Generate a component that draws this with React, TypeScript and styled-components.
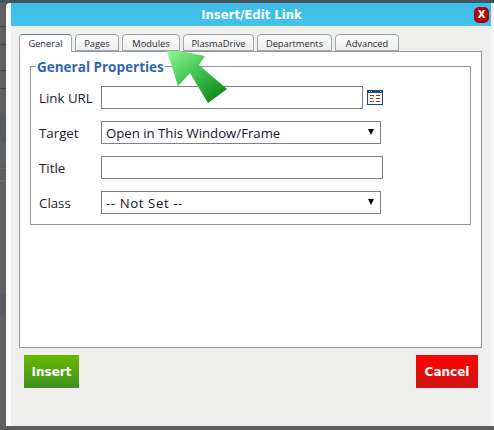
import React from 'react'
import styled, { createGlobalStyle } from 'styled-components'

const GlobalStyle = createGlobalStyle`
  html, body {
    margin: 0;
    padding: 0;
    background: #5f5f5f;
    overflow: hidden;
  }
`

// the dimmed page behind the dialog only shows as a thin strip on the left and top
const Backdrop = styled.div`
  position: relative;
  box-sizing: border-box;
  width: 494px;
  height: 430px;
  padding: 3px 0 4px 6px;
  background:
    linear-gradient(#42555f 0 3px, transparent 3px),
    linear-gradient(
      transparent 26px, #474747 26px 27px, transparent 27px 44px, #474747 44px 45px,
      transparent 45px 70px, #474747 70px 71px, transparent 71px 88px, #474747 88px 89px,
      transparent 89px 115px, #575c64 115px 143px, #5d6268 143px 165px, transparent 165px 168px,
      #6a6a6a 168px 169px, transparent 169px 180px, #6a6a6a 180px 182px, transparent 182px 294px,
      #565b63 294px 315px, transparent 315px
    ),
    #5f5f5f;
`

const Dialog = styled.div`
  box-sizing: border-box;
  display: flex;
  flex-direction: column;
  height: 423px;
  background: #efefee;
  border-left: 5px solid #fafafa;
  border-right: 3px solid #f6f6f6;
  border-top-left-radius: 4px;
  overflow: hidden;
`

const TitleBar = styled.div`
  position: relative;
  flex: none;
  height: 23px;
  margin: 0 -3px 0 -5px;
  background: linear-gradient(#3dbde6, #43c1ea);
  display: flex;
  align-items: center;
  justify-content: center;
  color: #fff;
  font: bold 11.7px "DejaVu Sans", sans-serif;
  padding-left: 3px;
`

const CloseButton = styled.div`
  position: absolute;
  right: 5px;
  top: 4px;
  width: 15px;
  height: 16px;
  border-radius: 5px;
  background: radial-gradient(circle at 50% 40%, #c81010, #8a0000);
  color: #fff;
  font: bold 10px/16px "DejaVu Sans", sans-serif;
  text-align: center;
`

const Body = styled.div`
  flex: 1;
  display: flex;
  flex-direction: column;
  padding: 8px 9px 0 8px;
`

const Tabs = styled.div`
  display: flex;
  gap: 3px;
  height: 17px;
  position: relative;
  z-index: 1;
`

const Tab = styled.div<{ $active?: boolean; $width: number }>`
  box-sizing: border-box;
  width: ${p => p.$width}px;
  height: ${p => (p.$active ? 18 : 17)}px;
  border: 1px solid #9ea5a8;
  border-bottom: ${p => (p.$active ? '0' : '1px solid #9ea5a8')};
  border-top-color: ${p => (p.$active ? '#5f7f92' : '#9ea5a8')};
  border-radius: 4px 4px 0 0;
  background: ${p => (p.$active ? '#fff' : 'linear-gradient(#fbfbfb, #eeeeec)')};
  color: #2a2a3a;
  font: 9.3px/18px "Open Sans", sans-serif;
  text-align: center;
`

const Panel = styled.div`
  box-sizing: border-box;
  height: 297px;
  background: #fff;
  border: 1px solid #8f9a9f;
  padding: 14px 10px 0;
`

const Fieldset = styled.div`
  position: relative;
  box-sizing: border-box;
  height: 159px;
  border: 1px solid #8f9699;
  padding: 19px 0 0 8px;
  display: flex;
  flex-direction: column;
  gap: 12px;
`

const Legend = styled.div`
  position: absolute;
  left: 5px;
  top: -8px;
  padding: 0 1px;
  background: #fff;
  color: #3065ad;
  font: bold 13.5px/16px "Open Sans", sans-serif;
`

const Row = styled.div`
  display: flex;
  align-items: center;
  height: 23px;
`

const Label = styled.div`
  width: 62px;
  color: #1c1c28;
  font: 13.3px "Open Sans", sans-serif;
`

const Input = styled.div<{ $width: number }>`
  box-sizing: border-box;
  width: ${p => p.$width}px;
  height: 23px;
  border: 1px solid #808080;
  background: #fff;
`

const Select = styled.div<{ $width: number; $tracking?: number }>`
  position: relative;
  box-sizing: border-box;
  width: ${p => p.$width}px;
  height: 23px;
  border: 1px solid #808080;
  background: #fff;
  padding-left: 4px;
  color: #141428;
  font: 13.2px/22px "Open Sans", sans-serif;
  letter-spacing: ${p => p.$tracking ?? 0}px;

  &::after {
    content: '';
    position: absolute;
    right: 6px;
    top: 7px;
    border-left: 3.5px solid transparent;
    border-right: 3.5px solid transparent;
    border-top: 6px solid #000;
  }
`

const PickerIcon = styled.svg`
  margin-left: 4px;
  flex: none;
`

const Actions = styled.div`
  display: flex;
  justify-content: space-between;
  padding: 7px 4px 0 5px;
`

const ActionButton = styled.div<{ $from: string; $to: string; $width: number }>`
  box-sizing: border-box;
  width: ${p => p.$width}px;
  height: 33px;
  background: linear-gradient(${p => p.$from}, ${p => p.$to});
  color: #fff;
  font: bold 12px/35px "DejaVu Sans", sans-serif;
  text-align: center;
`

const Pointer = styled.svg`
  position: absolute;
  left: 160px;
  top: 40px;
`

function LinkPicker() {
  return (
    <PickerIcon width="16" height="15" viewBox="0 0 16 15">
      <rect x="0.5" y="0.5" width="15" height="14" fill="#fff" stroke="#24466f" />
      <rect x="0" y="0" width="16" height="3" fill="#24466f" />
      <rect x="2" y="1" width="1" height="1" fill="#fff" />
      <rect x="4" y="1" width="1" height="1" fill="#fff" />
      <rect x="13" y="1" width="1" height="1" fill="#fff" />
      <g fill="#b03020">
        <rect x="3" y="5" width="4" height="1" />
        <rect x="9" y="5" width="4" height="1" />
        <rect x="3" y="8" width="3" height="1" />
        <rect x="9" y="8" width="4" height="1" />
        <rect x="3" y="11" width="4" height="1" />
        <rect x="9" y="11" width="4" height="1" />
      </g>
    </PickerIcon>
  )
}

const tabs = [
  { name: 'General', width: 53 },
  { name: 'Pages', width: 44 },
  { name: 'Modules', width: 58 },
  { name: 'PlasmaDrive', width: 71 },
  { name: 'Departments', width: 75 },
  { name: 'Advanced', width: 64 },
]

export default function App() {
  return (
    <Backdrop>
      <GlobalStyle />
      <Dialog>
        <TitleBar>
          Insert/Edit Link
          <CloseButton>X</CloseButton>
        </TitleBar>
        <Body>
          <Tabs>
            {tabs.map((tab, index) => (
              <Tab key={tab.name} $active={index === 0} $width={tab.width}>{tab.name}</Tab>
            ))}
          </Tabs>
          <Panel>
            <Fieldset>
              <Legend>General Properties</Legend>
              <Row>
                <Label>Link URL</Label>
                <Input $width={262} />
                <LinkPicker />
              </Row>
              <Row>
                <Label>Target</Label>
                <Select $width={280}>Open in This Window/Frame</Select>
              </Row>
              <Row>
                <Label>Title</Label>
                <Input $width={282} />
              </Row>
              <Row>
                <Label>Class</Label>
                <Select $width={280} $tracking={0.6}>-- Not Set --</Select>
              </Row>
            </Fieldset>
          </Panel>
          <Actions>
            <ActionButton $from="#68b800" $to="#3f9020" $width={55}>Insert</ActionButton>
            <ActionButton $from="#ff0000" $to="#d01818" $width={62}>Cancel</ActionButton>
          </Actions>
        </Body>
      </Dialog>
      <Pointer width="70" height="66" viewBox="160 40 70 66">
        <defs>
          <linearGradient id="arrowFill" x1="0.1" y1="0" x2="0.9" y2="1">
            <stop offset="0" stopColor="#8cf58c" />
            <stop offset="0.5" stopColor="#3fc050" />
            <stop offset="1" stopColor="#068010" />
          </linearGradient>
        </defs>
        <polygon points="166,48 205,56 199,65 227,89 208,103 190,73 178,86" fill="url(#arrowFill)" />
      </Pointer>
    </Backdrop>
  )
}
